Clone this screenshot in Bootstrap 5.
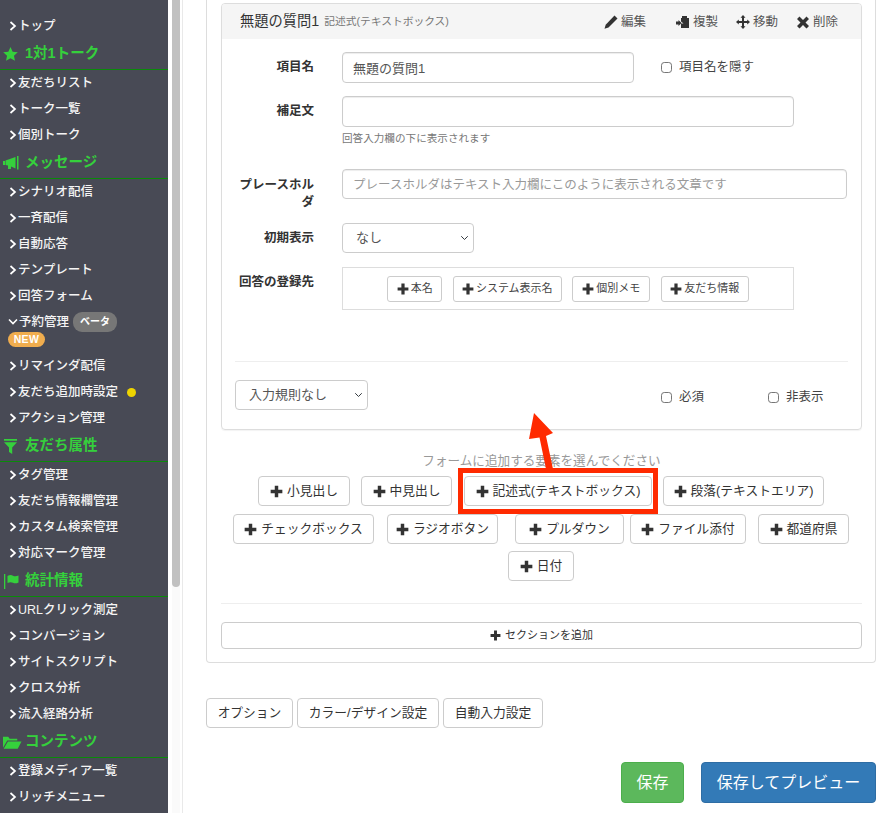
<!DOCTYPE html>
<html lang="ja">
<head>
  <meta charset="UTF-8" />
  <meta name="viewport" content="width=device-width, initial-scale=1.0"/>
  <title>回答フォーム</title>
  <link href="https://cdn.jsdelivr.net/npm/bootstrap@5.3.3/dist/css/bootstrap.min.css" rel="stylesheet">
  <style>
    html, body { height: 813px; overflow: hidden; }
    body {
      position: relative;
      font-family: "Liberation Sans", "Noto Sans CJK JP", sans-serif;
      font-size: 13px;
      color: #333;
      background: #fff;
    }
    .page-wrap { height: 813px; }
    /* sidebar */
    .side-menu { width: 168px; height: 813px; flex: none; background: #484a55; padding-top: 13px; overflow: hidden; }
    .side-item { height: 26px; padding-left: 9px; color: #f4f4f4; font-size: 12.5px; font-weight: 500; display: flex; align-items: center; white-space: nowrap; }
    .side-item > svg { flex: none; margin-right: 1px; }
    .side-head { height: 31px; border-bottom: 1px solid #0a8a0a; color: #35d03c; font-size: 14.5px; font-weight: 700; display: flex; align-items: center; padding-left: 3px; white-space: nowrap; }
    .head-icon { width: 22px; flex: none; display: flex; align-items: center; }
    .head-inset { margin-left: 1px; }
    .side-tall { height: 44px; padding-left: 8px; padding-top: 3px; color: #f4f4f4; font-size: 12.5px; font-weight: 500; line-height: 18px; }
    .side-tall svg { margin-right: 1px; }
    .pill-beta { background: #777; color: #fff; font-size: 10px; font-weight: 700; border-radius: 9px; padding: 1px 7px; margin-left: 4px; }
    .pill-new { display: block; width: 37px; background: #f0ad4e; color: #fff; font-size: 10.5px; font-weight: 700; border-radius: 8px; line-height: 15px; text-align: center; letter-spacing: .4px; }
    .dot-yellow { width: 9px; height: 9px; border-radius: 50%; background: #eed400; margin-left: 9px; }
    .scroll-gutter { width: 15px; flex: none; border-right: 1px solid #e9e9e9; padding: 0 2px 0 4px; background: #fff; }
    .scroll-track { background: #fafafa; height: 813px; }
    .scroll-thumb { height: 587px; background: #c1c1c1; border-radius: 0 0 4px 4px; }
    /* main */
    .main-col { margin-left: 23px; width: 670px; flex: none; }
    .outer-panel { height: 663px; border: 1px solid #ddd; border-top: 0; border-radius: 0 0 4px 4px; padding: 3px 13px 0 14px; }
    .q-card { height: 427px; border: 1px solid #ddd; border-radius: 4px; padding: 0 13px; box-shadow: 0 1px 1px rgba(0,0,0,.05); }
    .q-head { height: 35px; margin: 0 -13px; padding: 0 23px 0 18px; background: #f5f5f5; border-radius: 3px 3px 0 0; }
    .q-title { font-size: 14.25px; }
    .q-type { font-size: 10.75px; color: #777; margin-left: 5px; }
    .q-acts { margin-left: auto; gap: 18px; padding-top: 1px; }
    .q-act { font-size: 12.5px; color: #555; display: flex; align-items: center; gap: 3px; white-space: nowrap; }
    .q-act-first { margin-right: 12px; }
    .f-label { width: 79px; flex: none; margin-right: 28px; margin-bottom: 0; text-align: right; font-weight: 700; font-size: 12.5px; line-height: 17px; color: #333; }
    .f-control { height: 31px; border: 1px solid #ccc; border-radius: 4px; font-size: 13px; padding: 0 10px; color: #555; box-shadow: inset 0 1px 1px rgba(0,0,0,.075); }
    .f-control::placeholder { color: #999; font-size: 12.5px; }
    .f-short { height: 30px; }
    .f-select { height: 30px; border-color: #ccc; border-radius: 4px; font-size: 13px; padding: 0 20px 0 13px; color: #555; background-position: right 4px center; background-size: 9px 8px; }
    .q-check { width: 11px; height: 11px; margin: 0; border: 1px solid #767676; border-radius: 2px; flex: none; }
    .check-text { font-size: 12.5px; color: #444; white-space: nowrap; margin-left: 7px; }
    .w-292 { width: 292px; }
    .w-452 { width: 452px; }
    .w-505 { width: 505px; }
    .help-line { font-size: 10.6px; color: #777; margin-left: 107px; margin-top: 3px; height: 16px; line-height: 16px; }
    .dest-box { width: 452px; height: 43px; border: 1px solid #ddd; gap: 10.500px; }
    .tiny-btn { height: 26px; border: 1px solid #ccc; border-radius: 3px; background: #fff; font-size: 11px; color: #444; padding: 0; display: flex; align-items: center; justify-content: center; gap: 2px; white-space: nowrap; }
    .add-btn { height: 30px; border: 1px solid #ccc; border-radius: 4px; background: #fff; font-size: 12.75px; color: #333; display: flex; align-items: center; justify-content: center; gap: 4px; white-space: nowrap; padding: 0; }
    .thin-rule { height: 1px; background: #eee; }
    .add-note { color: #999; font-size: 12.6px; height: 20px; line-height: 20px; text-align: center; margin-top: 21px; margin-bottom: 5px; }
    .add-wrap { padding-right: 1px; }
    .add-row { gap: 11px; margin-bottom: 8px; }
    .add-row-tight { margin-bottom: 7px; }
    .section-btn { height: 27px; width: 100%; font-size: 11px; margin-top: 18px; }
    .tab-row { gap: 4px; margin-top: 35px; }
    .tab-btn { height: 30px; border: 1px solid #ccc; border-radius: 4px; background: #fff; font-size: 12.75px; color: #333; white-space: nowrap; padding: 0; display: flex; align-items: center; justify-content: center; }
    .save-row { gap: 17px; margin-top: 34px; }
    .save-btn { height: 41px; border-radius: 4px; color: #fff; font-size: 16px; border: 1px solid; display: flex; align-items: center; justify-content: center; padding: 0; }
    .save-green { background: #5cb85c; border-color: #4cae4c; width: 63px; }
    .save-blue { background: #337ab7; border-color: #2e6da4; width: 175px; }
    /* spacing of the form rows */
    .row-name { margin-top: 13px; }
    .row-note { margin-top: 13px; }
    .row-holder { margin-top: 23px; }
    .row-init { margin-top: 12px; }
    .row-dest { margin-top: 14px; }
    .row-rule { margin-top: 51px; }
    .row-bottom { margin-top: 18px; }
    .row-split { margin-top: 22px; }
    .label-pad-2 { padding-top: 8px; }
    .label-pad-1 { padding-top: 7px; }
    .check-hide { margin-left: 27px; }
    .check-req { margin-left: 293px; margin-top: 4px; }
    .check-off { margin-left: 64px; margin-top: 4px; }
    .text-down { margin-top: 4px; }
    .sel-132 { width: 132px; }
    .sel-133 { width: 133px; }
    .t-55 { width: 55px; } .t-109 { width: 109px; } .t-78 { width: 78px; } .t-88 { width: 88px; }
    .b-92 { width: 92px; } .b-91 { width: 91px; } .b-188 { width: 188px; margin-left: 1px; } .b-161 { width: 161px; }
    .b-141 { width: 141px; } .b-111 { width: 111px; margin-left: 2px; } .b-109 { width: 109px; margin-left: 6px; }
    .b-116 { width: 116px; margin-left: -5px; } .b-91b { width: 91px; margin-left: 1px; } .b-66 { width: 66px; }
    .tab-87 { width: 87px; } .tab-142 { width: 142px; } .tab-100 { width: 100px; }
    /* annotation over the page */
    .mark-box { position: absolute; left: 458px; top: 468px; width: 200px; height: 46px; border: 5px solid #ff2a00; }
    .mark-arrow { position: absolute; left: 520px; top: 405px; }
  </style>
</head>
<body>
  <svg width="0" height="0" class="position-absolute">
    <defs>
      <symbol id="chev" viewBox="0 0 8 10"><path d="M1.500 1 L6 5 L1.500 9" fill="none" stroke="#fff" stroke-width="1.700"/></symbol>
      <symbol id="plus" viewBox="0 0 12 12"><path d="M4.400 .6h3.200v3.800h3.800v3.200H7.600v3.800H4.400V7.600H.6V4.400h3.800z" fill="#333"/></symbol>
    </defs>
  </svg>

  <div class="page-wrap d-flex">
    <nav class="side-menu">
      <div class="side-item"><svg width="8" height="10"><use href="#chev"/></svg>トップ</div>
      <div class="side-head"><span class="head-icon"><svg width="15" height="14" viewBox="0 0 16 15"><path d="M8 0l2.300 5 5.500.6-4.100 3.700 1.100 5.400L8 12l-4.800 2.700 1.100-5.400L.2 5.600 5.700 5z" fill="#35d03c"/></svg></span>1対1トーク</div>
      <div class="side-item"><svg width="8" height="10"><use href="#chev"/></svg>友だちリスト</div>
      <div class="side-item"><svg width="8" height="10"><use href="#chev"/></svg>トーク一覧</div>
      <div class="side-item"><svg width="8" height="10"><use href="#chev"/></svg>個別トーク</div>
      <div class="side-head"><span class="head-icon"><svg width="16" height="14" viewBox="0 0 16 14"><path d="M0 5h2v4H0zM2.500 4.500L12.500 1v11.500L8 10.500v2.500H5V9.500L2.500 9zM14 0h1.500v13.500H14z" fill="#35d03c"/></svg></span>メッセージ</div>
      <div class="side-item"><svg width="8" height="10"><use href="#chev"/></svg>シナリオ配信</div>
      <div class="side-item"><svg width="8" height="10"><use href="#chev"/></svg>一斉配信</div>
      <div class="side-item"><svg width="8" height="10"><use href="#chev"/></svg>自動応答</div>
      <div class="side-item"><svg width="8" height="10"><use href="#chev"/></svg>テンプレート</div>
      <div class="side-item"><svg width="8" height="10"><use href="#chev"/></svg>回答フォーム</div>
      <div class="side-tall">
        <div class="d-flex align-items-center"><svg width="10" height="8" viewBox="0 0 10 8"><path d="M1 1.500 L5 5.500 L9 1.500" fill="none" stroke="#fff" stroke-width="1.600"/></svg>予約管理<span class="pill-beta">ベータ</span></div>
        <span class="pill-new">NEW</span>
      </div>
      <div class="side-item"><svg width="8" height="10"><use href="#chev"/></svg>リマインダ配信</div>
      <div class="side-item"><svg width="8" height="10"><use href="#chev"/></svg>友だち追加時設定<span class="dot-yellow"></span></div>
      <div class="side-item"><svg width="8" height="10"><use href="#chev"/></svg>アクション管理</div>
      <div class="side-head"><span class="head-icon"><svg width="14" height="15" viewBox="0 0 14 15" class="head-inset"><path d="M0 0h13v1.800H0zM0 3.200h13L8.200 8.500v6.500L5 13V8.500z" fill="#35d03c"/></svg></span>友だち属性</div>
      <div class="side-item"><svg width="8" height="10"><use href="#chev"/></svg>タグ管理</div>
      <div class="side-item"><svg width="8" height="10"><use href="#chev"/></svg>友だち情報欄管理</div>
      <div class="side-item"><svg width="8" height="10"><use href="#chev"/></svg>カスタム検索管理</div>
      <div class="side-item"><svg width="8" height="10"><use href="#chev"/></svg>対応マーク管理</div>
      <div class="side-head"><span class="head-icon"><svg width="15" height="15" viewBox="0 0 15 15" class="head-inset"><path d="M0 0h1.300v15H0zM3.500 2c2-1.200 4-1.200 5.500-.3s3.500.8 5.500-.2v7c-2 1-4 1.200-5.500.3s-3.500-.9-5.500.2z" fill="#35d03c"/></svg></span>統計情報</div>
      <div class="side-item"><svg width="8" height="10"><use href="#chev"/></svg>URLクリック測定</div>
      <div class="side-item"><svg width="8" height="10"><use href="#chev"/></svg>コンバージョン</div>
      <div class="side-item"><svg width="8" height="10"><use href="#chev"/></svg>サイトスクリプト</div>
      <div class="side-item"><svg width="8" height="10"><use href="#chev"/></svg>クロス分析</div>
      <div class="side-item"><svg width="8" height="10"><use href="#chev"/></svg>流入経路分析</div>
      <div class="side-head"><span class="head-icon"><svg width="19" height="14" viewBox="0 0 20 14"><path d="M0 13V1.500h5.500L7 3.500h8V5.500H4.500zM5.200 6.500H19.500L15.500 14H.7z" fill="#35d03c"/></svg></span>コンテンツ</div>
      <div class="side-item"><svg width="8" height="10"><use href="#chev"/></svg>登録メディア一覧</div>
      <div class="side-item"><svg width="8" height="10"><use href="#chev"/></svg>リッチメニュー</div>
    </nav>

    <div class="scroll-gutter"><div class="scroll-track"><div class="scroll-thumb"></div></div></div>

    <main class="main-col">
      <div class="outer-panel">
        <section class="q-card">
          <div class="q-head d-flex align-items-center">
            <span class="q-title">無題の質問1</span><span class="q-type">記述式(テキストボックス)</span>
            <div class="q-acts d-flex">
              <span class="q-act q-act-first"><svg width="14" height="14" viewBox="0 0 14 14"><path d="M10.500.5l3 3-9 9-4 1.200 1.200-4z" fill="#333"/></svg>編集</span>
              <span class="q-act"><svg width="14" height="14" viewBox="0 0 14 14"><path d="M6 1h5v2h2v10H5V8.500h2.500L5 6.500V3h1zM0 6.500h2.500V5l3 3-3 3V9.500H0z" fill="#333"/></svg>複製</span>
              <span class="q-act"><svg width="14" height="14" viewBox="0 0 14 14"><path d="M7 0l2.500 2.800H8V6h3.200V4.500L14 7l-2.800 2.500V8H8v3.200h1.500L7 14l-2.500-2.800H6V8H2.800v1.500L0 7l2.800-2.500V6H6V2.800H4.500z" fill="#333"/></svg>移動</span>
              <span class="q-act"><svg width="14" height="14" viewBox="0 0 14 14"><path d="M3.500 1.500L7 5l3.500-3.500 2.500 2.500L9.500 7.500 13 11l-2.500 2.500L7 10l-3.500 3.500L1 11l3.500-3.500L1 4z" fill="#333"/></svg>削除</span>
            </div>
          </div>

          <div class="d-flex align-items-center row-name">
            <label class="f-label">項目名</label>
            <input class="form-control f-control w-292" value="無題の質問1">
            <input type="checkbox" class="form-check-input q-check check-hide">
            <span class="check-text">項目名を隠す</span>
          </div>

          <div class="d-flex align-items-center row-note">
            <label class="f-label">補足文</label>
            <input class="form-control f-control w-452">
          </div>
          <div class="help-line">回答入力欄の下に表示されます</div>

          <div class="d-flex row-holder">
            <label class="f-label label-pad-2">プレースホルダ</label>
            <input class="form-control f-control f-short w-505" placeholder="プレースホルダはテキスト入力欄にこのように表示される文章です">
          </div>

          <div class="d-flex align-items-center row-init">
            <label class="f-label">初期表示</label>
            <select class="form-select f-select sel-132"><option>なし</option></select>
          </div>

          <div class="d-flex row-dest">
            <label class="f-label label-pad-1">回答の登録先</label>
            <div class="dest-box d-flex align-items-center justify-content-center">
              <button class="tiny-btn t-55"><svg width="12" height="12"><use href="#plus"/></svg>本名</button>
              <button class="tiny-btn t-109"><svg width="12" height="12"><use href="#plus"/></svg>システム表示名</button>
              <button class="tiny-btn t-78"><svg width="12" height="12"><use href="#plus"/></svg>個別メモ</button>
              <button class="tiny-btn t-88"><svg width="12" height="12"><use href="#plus"/></svg>友だち情報</button>
            </div>
          </div>

          <div class="thin-rule row-rule"></div>

          <div class="d-flex align-items-center row-bottom">
            <select class="form-select f-select sel-133"><option>入力規則なし</option></select>
            <input type="checkbox" class="form-check-input q-check check-req">
            <span class="check-text text-down">必須</span>
            <input type="checkbox" class="form-check-input q-check check-off">
            <span class="check-text text-down">非表示</span>
          </div>
        </section>

        <div class="add-note">フォームに追加する要素を選んでください</div>
        <div class="add-wrap">
          <div class="d-flex justify-content-center add-row">
            <button class="add-btn b-92"><svg width="13" height="13"><use href="#plus"/></svg>小見出し</button>
            <button class="add-btn b-91"><svg width="13" height="13"><use href="#plus"/></svg>中見出し</button>
            <button class="add-btn b-188"><svg width="13" height="13"><use href="#plus"/></svg>記述式(テキストボックス)</button>
            <button class="add-btn b-161"><svg width="13" height="13"><use href="#plus"/></svg>段落(テキストエリア)</button>
          </div>
          <div class="d-flex justify-content-center add-row add-row-tight">
            <button class="add-btn b-141"><svg width="13" height="13"><use href="#plus"/></svg>チェックボックス</button>
            <button class="add-btn b-111"><svg width="13" height="13"><use href="#plus"/></svg>ラジオボタン</button>
            <button class="add-btn b-109"><svg width="13" height="13"><use href="#plus"/></svg>プルダウン</button>
            <button class="add-btn b-116"><svg width="13" height="13"><use href="#plus"/></svg>ファイル添付</button>
            <button class="add-btn b-91b"><svg width="13" height="13"><use href="#plus"/></svg>都道府県</button>
          </div>
          <div class="d-flex justify-content-center">
            <button class="add-btn b-66"><svg width="13" height="13"><use href="#plus"/></svg>日付</button>
          </div>
        </div>

        <div class="thin-rule row-split"></div>
        <button class="add-btn section-btn"><svg width="11" height="11"><use href="#plus"/></svg>セクションを追加</button>
      </div>

      <div class="d-flex tab-row">
        <button class="tab-btn tab-87">オプション</button>
        <button class="tab-btn tab-142">カラー/デザイン設定</button>
        <button class="tab-btn tab-100">自動入力設定</button>
      </div>

      <div class="d-flex justify-content-end save-row">
        <button class="save-btn save-green">保存</button>
        <button class="save-btn save-blue">保存してプレビュー</button>
      </div>
    </main>
  </div>

  <div class="mark-box"></div>
  <svg class="mark-arrow" width="50" height="65" viewBox="0 0 50 65">
    <path d="M14 8 L33 28 L26 31 L33 64 L26 64 L19.500 32.500 L9 34 Z" fill="#ff2a00"/>
  </svg>
</body>
</html>
